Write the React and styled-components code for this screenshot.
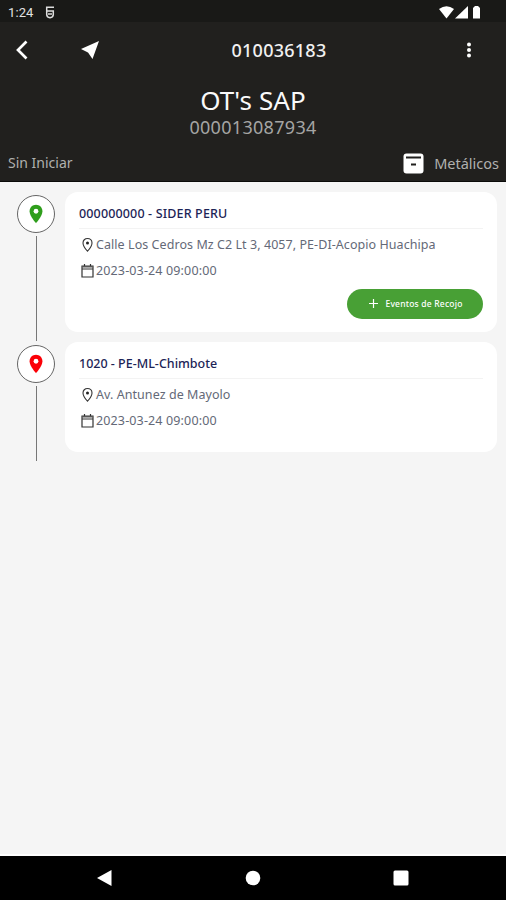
import React from "react";
import styled, { createGlobalStyle } from "styled-components";

const GlobalStyle = createGlobalStyle`
  * {
    box-sizing: border-box;
  }
  body {
    margin: 0;
    background: #f5f5f5;
    font-family: "Noto Sans", "Open Sans", sans-serif;
  }
`;

const Screen = styled.div`
  display: flex;
  flex-direction: column;
  width: 506px;
  height: 900px;
  overflow: hidden;
  background: #f5f5f5;
`;

const Label = styled.span`
  display: block;
  white-space: nowrap;
  color: ${props => props.$color};
  font-size: ${props => props.$size}px;
  font-weight: ${props => props.$weight || 400};
  letter-spacing: ${props => props.$spacing || 0}px;
  line-height: ${props => props.$line || 20}px;
`;

const StatusBar = styled.div`
  display: flex;
  align-items: center;
  gap: 12px;
  height: 22px;
  padding: 3px 24px 0 8px;
  background: #191917;
  font-family: Roboto, sans-serif;
  svg {
    display: block;
  }
`;

const StatusIcons = styled.div`
  display: flex;
  gap: 1px;
  margin-left: auto;
`;

const Header = styled.header`
  height: 160px;
  background: #21201e;
  border-bottom: 1px solid #0b0b0a;
`;

const Toolbar = styled.div`
  display: grid;
  grid-template-columns: 43px 94px 284px 1fr;
  align-items: center;
  height: 55px;
  padding-right: 11px;
  margin-right: -22px;
  svg {
    display: block;
    margin: 0 auto;
  }
`;

const ToolbarTitle = styled.div`
  display: flex;
  justify-content: center;
`;

const Titles = styled.div`
  display: flex;
  flex-direction: column;
  align-items: center;
  gap: 1px;
  padding-top: 7px;
`;

const StateRow = styled.div`
  display: flex;
  justify-content: space-between;
  align-items: center;
  height: 24px;
  margin-top: 14px;
  padding: 0 7px 0 8px;
`;

const Material = styled.div`
  display: flex;
  align-items: center;
  gap: 10px;
`;

const Stops = styled.main`
  flex: 1;
  padding: 10px 9px 0 16px;
`;

const Stop = styled.section`
  display: flex;
  gap: 9px;
  height: ${props => props.$height}px;
`;

const Rail = styled.div`
  display: flex;
  flex-direction: column;
  align-items: center;
  width: 40px;
  padding-top: 3px;
`;

const Marker = styled.div`
  display: flex;
  flex: none;
  align-items: center;
  justify-content: center;
  width: 38px;
  height: 38px;
  border: 1px solid #666;
  border-radius: 50%;
  background: #fff;
`;

const Line = styled.div`
  flex: none;
  width: 1px;
  height: ${props => props.$height}px;
  margin-top: 3px;
  background: #777;
`;

const Card = styled.article`
  flex: 1;
  height: ${props => props.$height}px;
  padding: 12px 14px 0;
  border-radius: 13px;
  background: #fff;
`;

const CardTitle = styled.div`
  height: 25px;
  margin-bottom: 5px;
  border-bottom: 1px solid #f3f3f3;
`;

const Detail = styled.div`
  display: flex;
  align-items: center;
  gap: 1px;
  height: 22px;
  margin-bottom: 4px;
  svg {
    flex: none;
    width: 15px;
    margin-left: 1px;
  }
`;

const EventButton = styled.button`
  display: flex;
  align-items: center;
  justify-content: center;
  gap: 7px;
  width: 136px;
  height: 30px;
  margin: 7px 0 0 auto;
  padding: 0 0 1px 2px;
  border: 0;
  border-radius: 15px;
  background: #48a035;
  font-family: inherit;
`;

const NavBar = styled.nav`
  display: flex;
  justify-content: space-between;
  align-items: center;
  height: 46px;
  padding: 0 97px 0 96px;
  border-top: 2px solid #fff;
  background: #000;
`;

const PIN =
  "M12 2C8.1 2 5 5.1 5 9c0 5.3 7 13 7 13s7-7.700 7-13c0-3.900-3.100-7-7-7z";

const stops = [
  {
    id: 1,
    color: "#2f9e1c",
    title: "000000000 - SIDER PERU",
    titleSpacing: 0.15,
    address: "Calle Los Cedros Mz C2 Lt 3, 4057, PE-DI-Acopio Huachipa",
    date: "2023-03-24 09:00:00",
    height: 150,
    cardHeight: 140,
    line: 105,
    action: "Eventos de Recojo"
  },
  {
    id: 2,
    color: "#fb0007",
    title: "1020 - PE-ML-Chimbote",
    titleSpacing: 0,
    address: "Av. Antunez de Mayolo",
    date: "2023-03-24 09:00:00",
    height: 110,
    cardHeight: 110,
    line: 75
  }
];

const MarkerPin = ({ color }) => (
  <svg width="22" height="22" viewBox="0 0 24 24">
    <path d={PIN} fill={color} />
    <circle cx="12" cy="9" r="2.6" fill="#fff" />
  </svg>
);

const AddressIcon = () => (
  <svg height="16" viewBox="0 0 15 16">
    <path
      d="M7.500 1.500C4.900 1.500 3 3.400 3 5.900c0 3.300 4.500 8.300 4.500 8.300s4.500-5 4.500-8.300c0-2.500-1.900-4.400-4.500-4.400z"
      fill="none"
      stroke="#333"
      strokeWidth="1.100"
    />
    <circle cx="7.500" cy="6" r="1.500" fill="#222" />
  </svg>
);

const DateIcon = () => (
  <svg height="16" viewBox="0 0 15 16">
    <path
      d="M2 3h11v11H2zM2 6h11M4.500 1v2M10.500 1v2"
      fill="none"
      stroke="#333"
      strokeWidth="1.200"
    />
    <path d="M2 3h11v1.500H2z" fill="#555" />
  </svg>
);

const StopRow = ({ stop }) => (
  <Stop $height={stop.height}>
    <Rail>
      <Marker>
        <MarkerPin color={stop.color} />
      </Marker>
      <Line $height={stop.line} />
    </Rail>
    <Card $height={stop.cardHeight}>
      <CardTitle>
        <Label
          $color="#1c2456"
          $size={12.5}
          $weight={500}
          $spacing={stop.titleSpacing}
        >
          {stop.title}
        </Label>
      </CardTitle>
      <Detail>
        <AddressIcon />
        <Label $color="#646977" $size={12.5} $spacing={0.06}>
          {stop.address}
        </Label>
      </Detail>
      <Detail>
        <DateIcon />
        <Label $color="#646977" $size={12.5} $spacing={0.14}>
          {stop.date}
        </Label>
      </Detail>
      {stop.action && (
        <EventButton>
          <svg width="9" height="9" viewBox="0 0 9 9">
            <path d="M4.500 0v9M0 4.500h9" stroke="#fff" strokeWidth="1.200" />
          </svg>
          <Label $color="#fff" $size={8.5} $weight={500} $spacing={0.2}>
            {stop.action}
          </Label>
        </EventButton>
      )}
    </Card>
  </Stop>
);

const App = () => (
  <Screen>
    <GlobalStyle />
    <StatusBar>
      <Label $color="#e2e2e2" $size={13} $line={16} $spacing={0.1}>
        1:24
      </Label>
      <svg width="10" height="13" viewBox="0 0 10 13">
        <path
          d="M9 1.200H1.700V8.500Q1.700 11.200 5 11.700Q8.300 11.200 8.300 8.500V5H1.700M3 8h4"
          fill="none"
          stroke="#ddd"
          strokeWidth="1.500"
        />
      </svg>
      <StatusIcons>
        <svg width="15" height="13" viewBox="0 0 15 13">
          <path d="M0 3Q7.500-2.500 15 3L7.500 12.500z" fill="#fff" />
        </svg>
        <svg width="13" height="13" viewBox="0 0 13 13">
          <path d="M13 0v12.500H0z" fill="#fff" />
        </svg>
        <svg width="13" height="13" viewBox="0 0 13 13">
          <path d="M4 2l2-2h3l2 2v10.500H4z" fill="#fff" />
        </svg>
      </StatusIcons>
    </StatusBar>
    <Header>
      <Toolbar>
        <svg width="14" height="20" viewBox="0 0 14 20">
          <path
            d="M11.500 1.500L3 10l8.500 8.500"
            fill="none"
            stroke="#fff"
            strokeWidth="2.700"
          />
        </svg>
        <svg width="20" height="20" viewBox="0 0 20 20">
          <path d="M19 1L1 9l7 3.500L12.500 19z" fill="#fff" />
        </svg>
        <ToolbarTitle>
          <Label $color="#f1f1f1" $size={18} $weight={500} $spacing={0.25}>
            010036183
          </Label>
        </ToolbarTitle>
        <svg width="6" height="16" viewBox="0 0 6 16">
          <circle cx="3" cy="2.500" r="2" fill="#fff" />
          <circle cx="3" cy="8" r="2" fill="#fff" />
          <circle cx="3" cy="13.500" r="2" fill="#fff" />
        </svg>
      </Toolbar>
      <Titles>
        <Label $color="#fafafa" $size={26} $line={32} $spacing={0.1}>
          OT's SAP
        </Label>
        <Label $color="#a5a5a4" $size={18} $spacing={0.3}>
          000013087934
        </Label>
      </Titles>
      <StateRow>
        <Label $color="#b0b0af" $size={14} $line={22}>
          Sin Iniciar
        </Label>
        <Material>
          <svg width="21" height="21" viewBox="0 0 21 21">
            <rect x="0.500" y="0.500" width="20" height="20" rx="3" fill="#fff" />
            <path d="M3 4.500h15M8 11.500h5" stroke="#21201e" strokeWidth="2" />
          </svg>
          <Label $color="#b0b0af" $size={14.5}>
            Metálicos
          </Label>
        </Material>
      </StateRow>
    </Header>
    <Stops>
      {stops.map(stop => (
        <StopRow key={stop.id} stop={stop} />
      ))}
    </Stops>
    <NavBar>
      <svg width="16" height="18" viewBox="0 0 16 18">
        <path d="M15.500 1v16L1 9z" fill="#fff" />
      </svg>
      <svg width="16" height="16" viewBox="0 0 16 16">
        <circle cx="8" cy="8" r="7.300" fill="#fff" />
      </svg>
      <svg width="16" height="16" viewBox="0 0 16 16">
        <rect x="0.500" y="0.500" width="15" height="15" rx="1.500" fill="#fff" />
      </svg>
    </NavBar>
  </Screen>
);

export default App;
